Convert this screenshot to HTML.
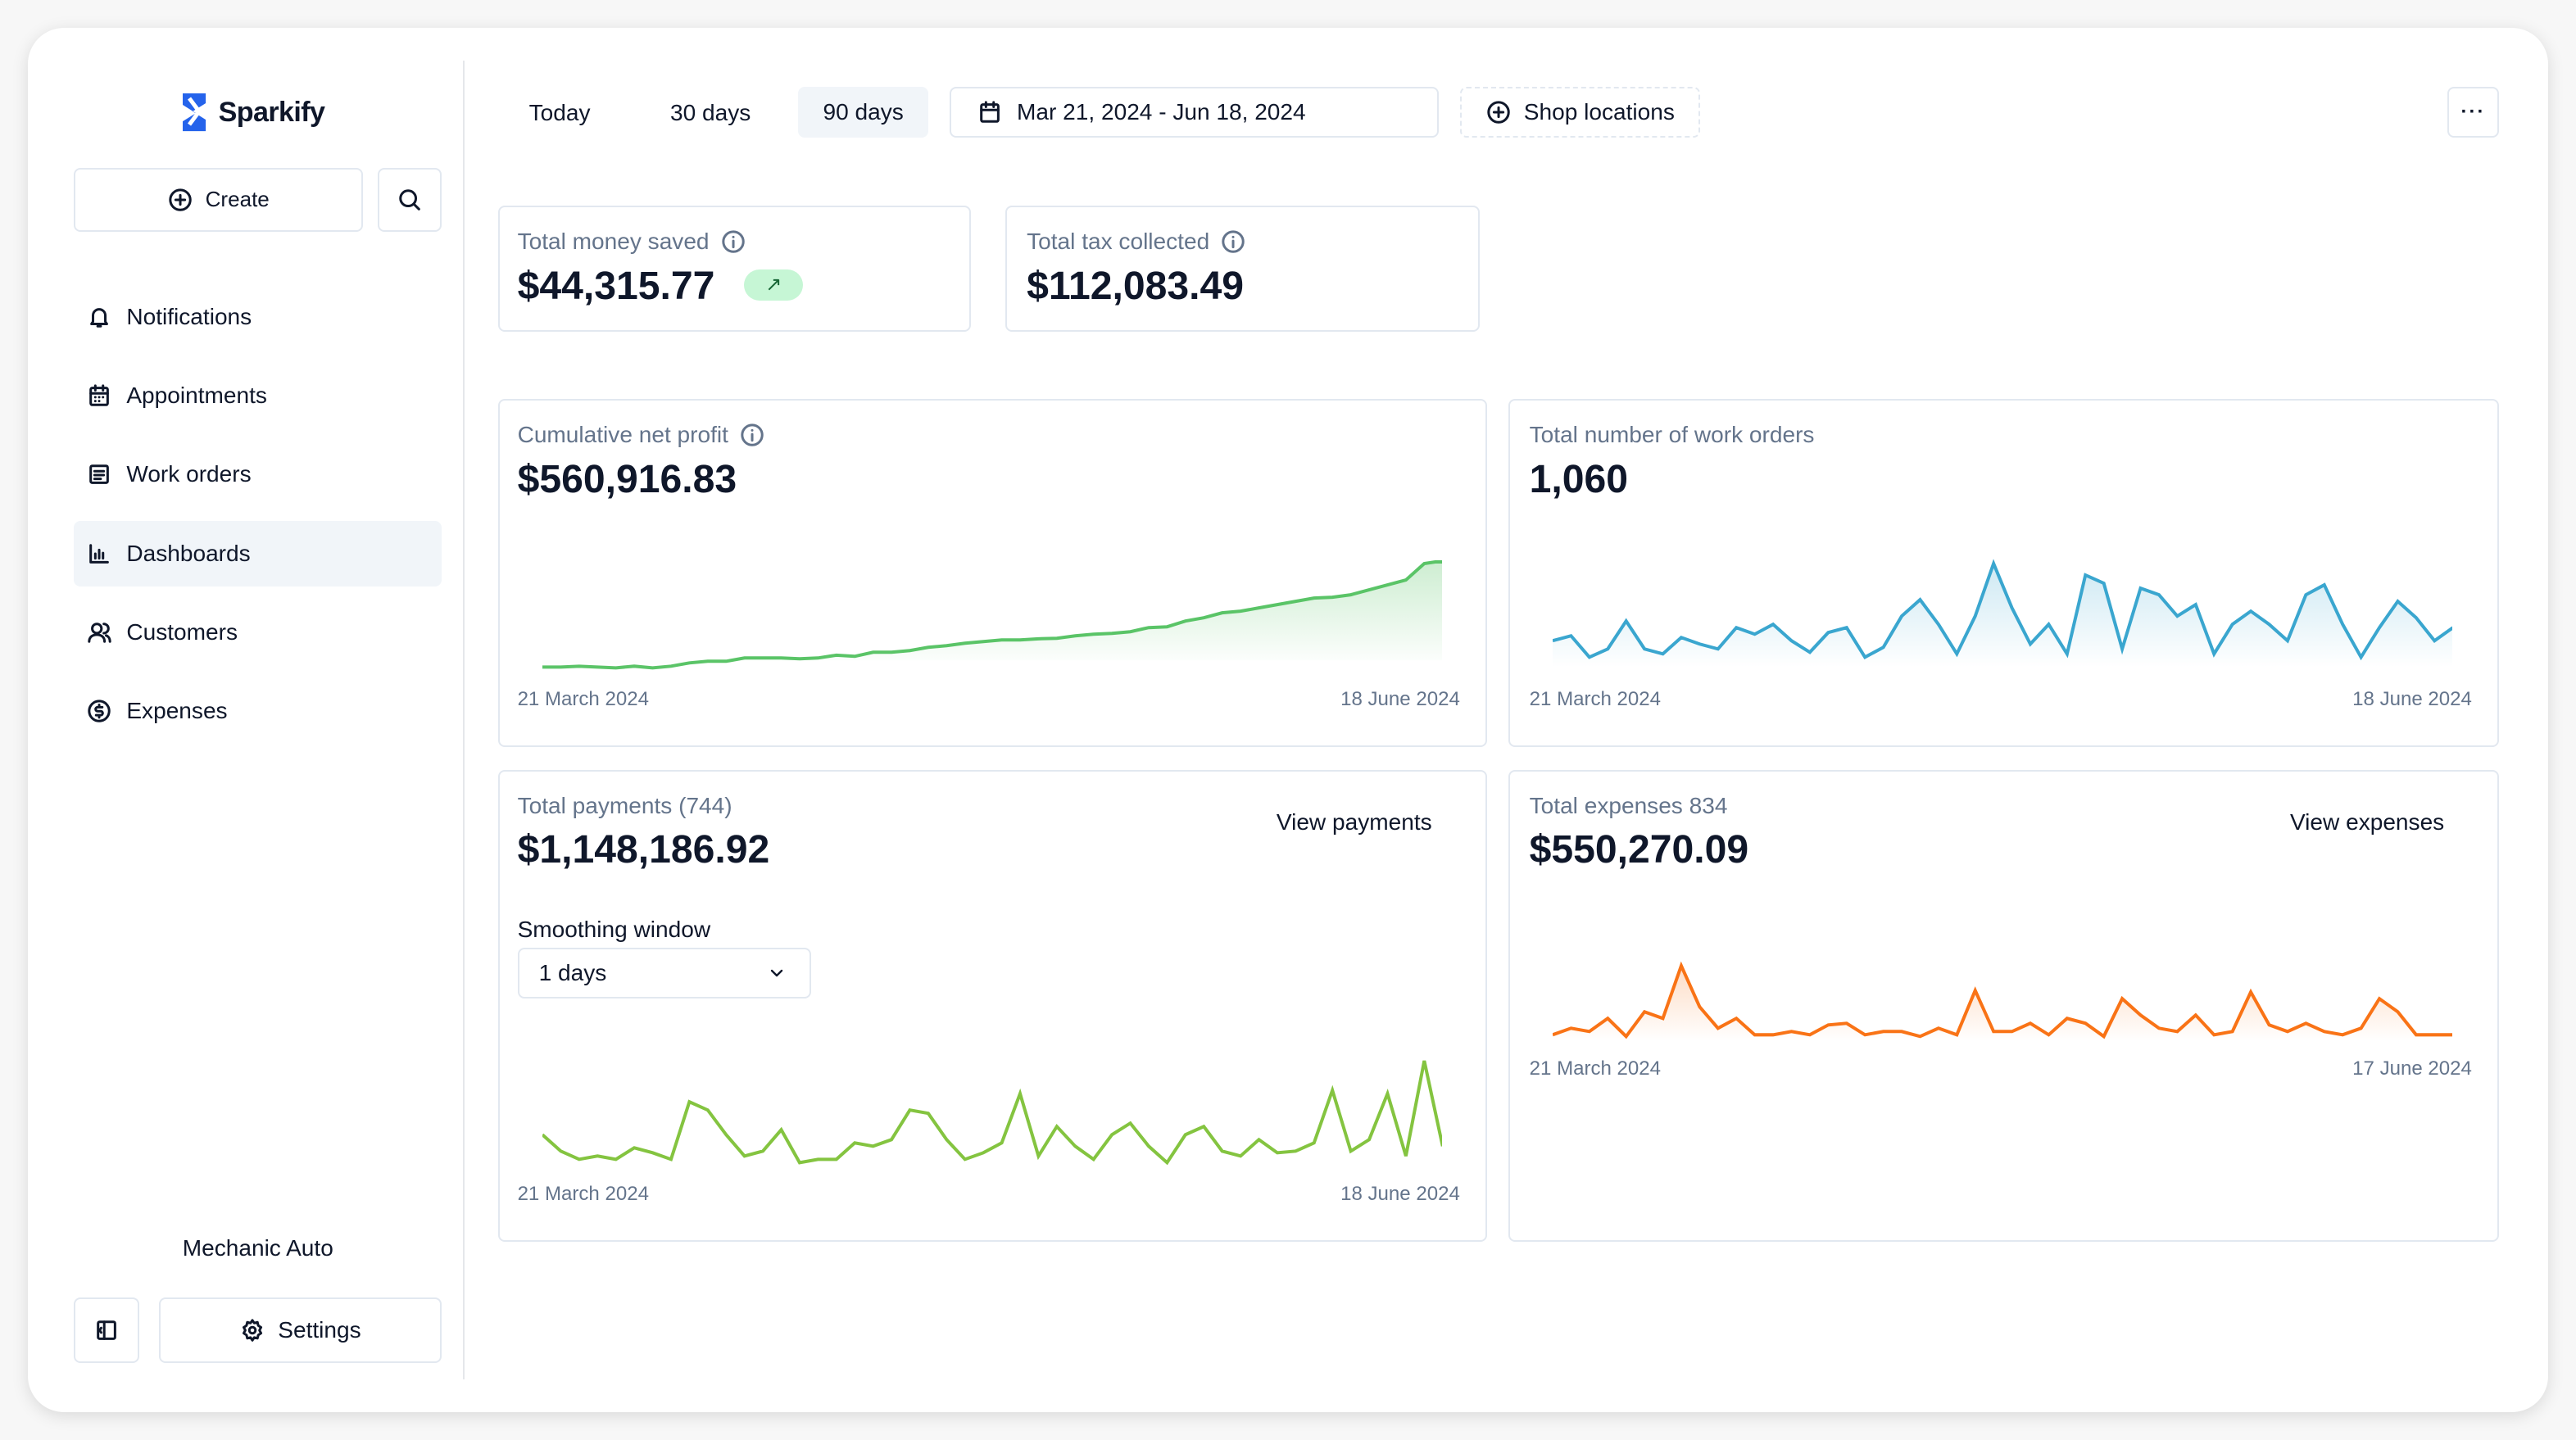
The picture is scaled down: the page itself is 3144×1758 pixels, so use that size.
<!DOCTYPE html>
<html><head><meta charset="utf-8"><style>
*{box-sizing:border-box;margin:0;padding:0}
html,body{width:3144px;height:1758px;overflow:hidden;background:#f7f7f7}
#z{zoom:2.005;width:1568px;height:877px;position:relative;font-family:"Liberation Sans",sans-serif;color:#0f172a}
.card{position:absolute;left:17px;top:17px;width:1534px;height:843px;background:#fff;border-radius:22px;box-shadow:0 2px 10px rgba(0,0,0,.12)}
.a{position:absolute}
.btn{position:absolute;border:1px solid #e2e8f0;border-radius:4px;background:#fff;display:flex;align-items:center;justify-content:center;font-size:14px;gap:8px}
.nav{position:absolute;left:45px;width:224px;height:40px;display:flex;align-items:center;padding-left:8px;gap:9px;font-size:14px;border-radius:4px}
.box{position:absolute;border:1px solid #e2e8f0;border-radius:4px;background:#fff}
.lbl{position:absolute;font-size:14px;color:#64748b;display:flex;align-items:center;gap:7px}
.val{position:absolute;font-size:24px;font-weight:bold;color:#0f172a}
.date{position:absolute;font-size:12px;color:#64748b}
svg.i{width:15px;height:15px;fill:none;stroke:currentColor;stroke-width:1.6;stroke-linecap:round;stroke-linejoin:round}
</style></head><body><div id="z">
<div class="card"></div>
<div class="a" style="left:282px;top:37px;width:1px;height:803px;background:#e5e7eb"></div>

<svg class="a" style="left:107px;top:56px" width="22" height="25" viewBox="0 0 22 25"><path d="M4 1h14v6L10 12l8 5v7H4v-6l8-5-8-5z" fill="#2563eb"/><path d="M8 4l6 8-6 8" stroke="#fff" stroke-width="2.5" fill="none"/></svg>
<div class="a" style="left:133px;top:59px;font-size:17px;font-weight:bold;letter-spacing:-.3px">Sparkify</div>

<div class="btn" style="left:45px;top:102px;width:176px;height:39px;font-size:13px"><svg class="i" viewBox="0 0 16 16"><circle cx="8" cy="8" r="6.5"/><path d="M8 5v6M5 8h6"/></svg>Create</div>
<div class="btn" style="left:230px;top:102px;width:39px;height:39px"><svg class="i" viewBox="0 0 16 16"><circle cx="7" cy="7" r="5"/><path d="M11 11l3 3"/></svg></div>

<div class="nav" style="top:173px"><svg class="i" viewBox="0 0 16 16"><path d="M4 11V7a4 4 0 018 0v4l1 1.5H3zM7 14h2"/></svg>Notifications</div>
<div class="nav" style="top:221px"><svg class="i" viewBox="0 0 16 16"><rect x="2.5" y="3" width="11" height="11" rx="1"/><path d="M2.5 6.5h11M5.5 1.5v3M10.5 1.5v3M5.5 9h0M8 9h0M10.5 9h0M5.5 11.5h0M8 11.5h0"/></svg>Appointments</div>
<div class="nav" style="top:269px"><svg class="i" viewBox="0 0 16 16"><rect x="2.5" y="2.5" width="11" height="11" rx="1"/><path d="M5 6h6M5 8.5h6M5 11h4"/></svg>Work orders</div>
<div class="nav" style="top:317px;background:#f1f5f9"><svg class="i" viewBox="0 0 16 16"><path d="M2.5 2.5v11h11M5.5 11V8M8 11V5.5M10.5 11V7.5"/></svg>Dashboards</div>
<div class="nav" style="top:365px"><svg class="i" viewBox="0 0 16 16"><circle cx="6.5" cy="5.5" r="3"/><path d="M1.5 14c0-3 2.2-4.5 5-4.5s5 1.5 5 4.5M11 2.5a3 3 0 010 6M12.5 10c1.5.5 2.5 2 2.5 4"/></svg>Customers</div>
<div class="nav" style="top:413px"><svg class="i" viewBox="0 0 16 16"><circle cx="8" cy="8" r="6.5"/><path d="M10 5.5H7a1.3 1.3 0 000 2.6h2a1.3 1.3 0 010 2.6H6M8 4v1.5M8 10.7v1.5"/></svg>Expenses</div>

<div class="a" style="left:45px;top:752px;width:224px;text-align:center;font-size:14px">Mechanic Auto</div>
<div class="btn" style="left:45px;top:790px;width:40px;height:40px"><svg class="i" viewBox="0 0 16 16"><rect x="2.5" y="2.5" width="11" height="11" rx="1"/><path d="M6.5 2.5v11M4.5 6.5l-1 1.5 1 1.5"/></svg></div>
<div class="btn" style="left:97px;top:790px;width:172px;height:40px"><svg class="i" viewBox="0 0 16 16"><circle cx="8" cy="8" r="2"/><path d="M8 1.5l1.2 1.8 2.1-.5.5 2.1 1.8 1.2-1 1.9 1 1.9-1.8 1.2-.5 2.1-2.1-.5L8 14.5l-1.2-1.8-2.1.5-.5-2.1-1.8-1.2 1-1.9-1-1.9 1.8-1.2.5-2.1 2.1.5z"/></svg>Settings</div>

<div class="a" style="left:322px;top:61px;font-size:14px">Today</div>
<div class="a" style="left:408px;top:61px;font-size:14px">30 days</div>
<div class="a" style="left:486px;top:53px;width:79px;height:31px;background:#f1f5f9;border-radius:4px;font-size:14px;text-align:center;line-height:31px">90 days</div>
<div class="btn" style="left:578px;top:53px;width:298px;height:31px;justify-content:flex-start;padding-left:16px;gap:9px"><svg class="i" viewBox="0 0 16 16"><rect x="2.5" y="3" width="11" height="11" rx="1"/><path d="M2.5 6.5h11M5.5 1.5v3M10.5 1.5v3"/></svg>Mar 21, 2024 - Jun 18, 2024</div>
<div class="btn" style="left:889px;top:53px;width:146px;height:31px;border-style:dashed"><svg class="i" viewBox="0 0 16 16"><circle cx="8" cy="8" r="6.5"/><path d="M8 5v6M5 8h6"/></svg>Shop locations</div>
<div class="btn" style="left:1490px;top:53px;width:31px;height:31px;font-weight:bold;font-size:12px;letter-spacing:1px">···</div>

<div class="box" style="left:303px;top:125px;width:288px;height:77px"></div>
<div class="lbl" style="left:315px;top:139px">Total money saved <svg class="i" viewBox="0 0 16 16"><circle cx="8" cy="8" r="6.5"/><path d="M8 7.5v4M8 5h0"/></svg></div>
<div class="val" style="left:315px;top:160px">$44,315.77</div>
<div class="a" style="left:453px;top:164px;width:36px;height:19px;background:#c6f6d5;border-radius:10px;color:#166534;font-size:12px;text-align:center;line-height:19px">↗</div>
<div class="box" style="left:612px;top:125px;width:289px;height:77px"></div>
<div class="lbl" style="left:625px;top:139px">Total tax collected <svg class="i" viewBox="0 0 16 16"><circle cx="8" cy="8" r="6.5"/><path d="M8 7.5v4M8 5h0"/></svg></div>
<div class="val" style="left:625px;top:160px">$112,083.49</div>

<div class="box" style="left:303px;top:243px;width:602px;height:212px"></div>
<div class="box" style="left:918px;top:243px;width:603px;height:212px"></div>
<div class="box" style="left:303px;top:469px;width:602px;height:287px"></div>
<div class="box" style="left:918px;top:469px;width:603px;height:287px"></div>

<div class="lbl" style="left:315px;top:257px">Cumulative net profit <svg class="i" viewBox="0 0 16 16"><circle cx="8" cy="8" r="6.5"/><path d="M8 7.5v4M8 5h0"/></svg></div>
<div class="val" style="left:315px;top:278px">$560,916.83</div>
<div class="date" style="left:315px;top:419px">21 March 2024</div>
<div class="date" style="left:816px;top:419px">18 June 2024</div>

<div class="lbl" style="left:931px;top:257px">Total number of work orders</div>
<div class="val" style="left:931px;top:278px">1,060</div>
<div class="date" style="left:931px;top:419px">21 March 2024</div>
<div class="date" style="left:1432px;top:419px">18 June 2024</div>

<div class="lbl" style="left:315px;top:483px">Total payments (744)</div>
<div class="val" style="left:315px;top:503px">$1,148,186.92</div>
<div class="a" style="left:777px;top:493px;font-size:14px">View payments</div>
<div class="a" style="left:315px;top:558px;font-size:14px">Smoothing window</div>
<div class="btn" style="left:315px;top:577px;width:179px;height:31px;justify-content:space-between;padding:0 14px 0 12px">1 days<svg class="i" viewBox="0 0 16 16" style="width:12px"><path d="M4 6l4 4 4-4"/></svg></div>
<div class="date" style="left:315px;top:720px">21 March 2024</div>
<div class="date" style="left:816px;top:720px">18 June 2024</div>

<div class="lbl" style="left:931px;top:483px">Total expenses 834</div>
<div class="val" style="left:931px;top:503px">$550,270.09</div>
<div class="a" style="left:1394px;top:493px;font-size:14px">View expenses</div>
<div class="date" style="left:931px;top:644px">21 March 2024</div>
<div class="date" style="left:1432px;top:644px">17 June 2024</div>

<svg class="a" width="0" height="0"><defs>
<linearGradient id="gg" x1="0" y1="0" x2="0" y2="1"><stop offset="0" stop-color="#5ac467" stop-opacity=".3"/><stop offset="1" stop-color="#5ac467" stop-opacity="0"/></linearGradient>
<linearGradient id="gb" x1="0" y1="0" x2="0" y2="1"><stop offset="0" stop-color="#3aa6cf" stop-opacity=".25"/><stop offset="1" stop-color="#3aa6cf" stop-opacity="0"/></linearGradient>
<linearGradient id="go" x1="0" y1="0" x2="0" y2="1"><stop offset="0" stop-color="#f97316" stop-opacity=".25"/><stop offset="1" stop-color="#f97316" stop-opacity="0"/></linearGradient>
</defs></svg>

<svg class="a" style="left:330px;top:340px" width="548" height="70" viewBox="0 0 49 70" preserveAspectRatio="none">
<polygon fill="url(#gg)" points="0,66 1,66 2,65.5 3,66 4,66.5 5,65.5 6,66.5 7,65.5 8,63.5 9,62.5 10,62.5 11,60.5 12,60.5 13,60.5 14,61 15,60.5 16,58.8 17,59.5 18,57 19,57 20,56 21,54 22,53 23,51.5 24,50.5 25,49.5 26,49.5 27,48.8 28,48.5 29,47 30,46 31,45.5 32,44.5 33,42 34,41.5 35,38 36,36 37,33 38,32 39,30 40,28 41,26 42,24 43,23.5 44,22 45,19 46,16 47,13 48,3 48.6,2 49,2 49,62 0,62"/>
<polyline fill="none" stroke="#5ac467" stroke-width="2" vector-effect="non-scaling-stroke" points="0,66 1,66 2,65.5 3,66 4,66.5 5,65.5 6,66.5 7,65.5 8,63.5 9,62.5 10,62.5 11,60.5 12,60.5 13,60.5 14,61 15,60.5 16,58.8 17,59.5 18,57 19,57 20,56 21,54 22,53 23,51.5 24,50.5 25,49.5 26,49.5 27,48.8 28,48.5 29,47 30,46 31,45.5 32,44.5 33,42 34,41.5 35,38 36,36 37,33 38,32 39,30 40,28 41,26 42,24 43,23.5 44,22 45,19 46,16 47,13 48,3 48.6,2 49,2"/>
</svg>

<svg class="a" style="left:945px;top:340px" width="548" height="66" viewBox="0 0 49 66" preserveAspectRatio="none">
<polygon fill="url(#gb)" points="0,50 1,47 2,60 3,55 4,38 5,55 6,58 7,48 8,52 9,55 10,42 11,46 12,40 13,50 14,57 15,45 16,42 17,60 18,54 19,35 20,25 21,40 22,58 23,35 24,3 25,30 26,52 27,40 28,58 29,10 30,15 31,55 32,18 33,22 34,35 35,28 36,58 37,40 38,32 39,40 40,50 41,22 42,16 43,40 44,60 45,42 46,26 47,36 48,50 49,42 49,66 0,66"/>
<polyline fill="none" stroke="#3aa6cf" stroke-width="2" vector-effect="non-scaling-stroke" points="0,50 1,47 2,60 3,55 4,38 5,55 6,58 7,48 8,52 9,55 10,42 11,46 12,40 13,50 14,57 15,45 16,42 17,60 18,54 19,35 20,25 21,40 22,58 23,35 24,3 25,30 26,52 27,40 28,58 29,10 30,15 31,55 32,18 33,22 34,35 35,28 36,58 37,40 38,32 39,40 40,50 41,22 42,16 43,40 44,60 45,42 46,26 47,36 48,50 49,42"/>
</svg>

<svg class="a" style="left:330px;top:636px" width="548" height="76" viewBox="0 0 49 76" preserveAspectRatio="none">
<polyline fill="none" stroke="#84c440" stroke-width="2" vector-effect="non-scaling-stroke" points="0,55 1,65 2,70 3,68 4,70 5,63 6,66 7,70 8,35 9,40 10,55 11,68 12,65 13,52 14,72 15,70 16,70 17,60 18,62 19,58 20,40 21,42 22,58 23,70 24,66 25,60 26,30 27,68 28,50 29,62 30,70 31,55 32,48 33,62 34,72 35,55 36,50 37,65 38,68 39,58 40,66 41,65 42,60 43,28 44,65 45,58 46,30 47,68 48,10 49,62"/>
</svg>

<svg class="a" style="left:945px;top:568px" width="548" height="66" viewBox="0 0 49 66" preserveAspectRatio="none">
<polygon fill="url(#go)" points="0,62 1,58 2,60 3,52 4,63 5,48 6,52 7,20 8,45 9,58 10,52 11,62 12,62 13,60 14,62 15,56 16,55 17,62 18,60 19,60 20,63 21,58 22,62 23,35 24,60 25,60 26,55 27,62 28,52 29,55 30,63 31,40 32,50 33,58 34,60 35,50 36,62 37,60 38,36 39,56 40,60 41,55 42,60 43,62 44,58 45,40 46,48 47,62 48,62 49,62 49,66 0,66"/>
<polyline fill="none" stroke="#f97316" stroke-width="2" vector-effect="non-scaling-stroke" points="0,62 1,58 2,60 3,52 4,63 5,48 6,52 7,20 8,45 9,58 10,52 11,62 12,62 13,60 14,62 15,56 16,55 17,62 18,60 19,60 20,63 21,58 22,62 23,35 24,60 25,60 26,55 27,62 28,52 29,55 30,63 31,40 32,50 33,58 34,60 35,50 36,62 37,60 38,36 39,56 40,60 41,55 42,60 43,62 44,58 45,40 46,48 47,62 48,62 49,62"/>
</svg>
</div></body></html>
